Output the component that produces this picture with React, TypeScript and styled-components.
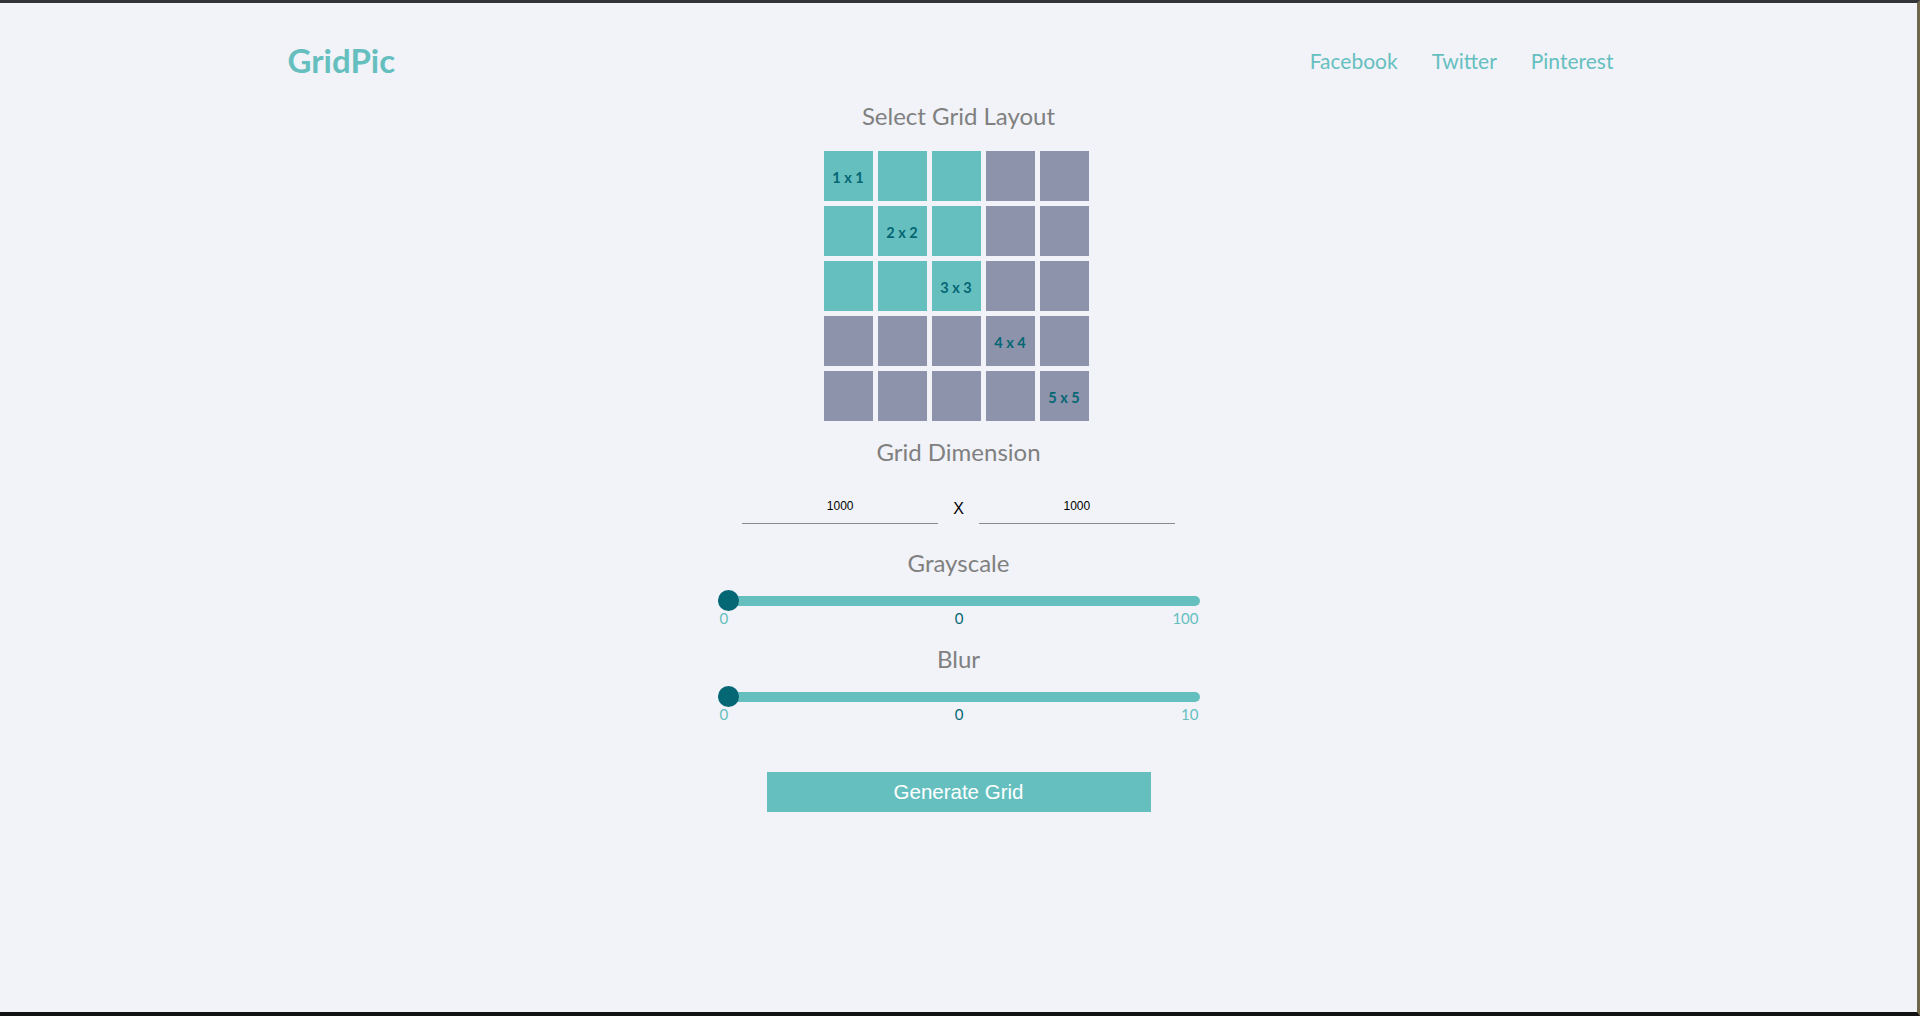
import React, { useState } from 'react';
import styled, { createGlobalStyle } from 'styled-components';

const colors = {
  bg: '#f1f3f8',
  teal: '#66bfbf',
  darkTeal: '#056674',
  slate: '#8d93ab',
  title: '#808080',
};

const GlobalStyle = createGlobalStyle`
  html, body {
    margin: 0;
    padding: 0;
    background: ${colors.bg};
    font-family: Lato, "Open Sans", sans-serif;
  }
  * {
    box-sizing: border-box;
  }
`;

const Frame = styled.div`
  min-height: 100vh;
  border-top: 3px solid #333438;
  border-right: 3px solid #70664c;
  border-bottom: 4px solid #121212;
  display: flex;
  flex-direction: column;
`;

const Header = styled.header`
  width: 70%;
  margin: 0 auto;
  padding-top: 36px;
  display: flex;
  align-items: center;
  justify-content: space-between;
`;

const Logo = styled.h1`
  margin: 0;
  font-size: 33px;
  line-height: 42px;
  font-weight: 700;
  color: ${colors.teal};
`;

const Nav = styled.nav`
  display: flex;
  margin-top: 2px;
`;

const NavLink = styled.a`
  padding: 0 16px 0 18px;
  font-size: 21px;
  line-height: 26px;
  color: ${colors.teal};
  text-decoration: none;
`;

const Main = styled.main`
  display: flex;
  flex-direction: column;
  align-items: center;
`;

const Title = styled.h2<{ $top: number }>`
  margin: ${p => p.$top}px 0 0;
  font-size: 24px;
  line-height: 29px;
  font-weight: 400;
  color: ${colors.title};
`;

const Grid = styled.div`
  margin-top: 21px;
  padding-right: 5px;
  display: grid;
  grid-template-columns: repeat(5, 49px);
  grid-auto-rows: 50px;
  gap: 5px;
`;

const Cell = styled.div<{ $active: boolean }>`
  background: ${p => (p.$active ? colors.teal : colors.slate)};
  display: flex;
  align-items: center;
  justify-content: center;
  padding-top: 2px;
  font-size: 14.5px;
  font-weight: 700;
  color: ${colors.darkTeal};
  cursor: pointer;
`;

const DimensionRow = styled.div`
  margin-top: 20px;
  display: flex;
  align-items: center;
`;

const DimensionInput = styled.input`
  width: 196px;
  height: 38px;
  border: none;
  border-bottom: 1px solid #8a8a8a;
  background: transparent;
  text-align: center;
  font-family: "Liberation Sans", Arial, sans-serif;
  font-size: 12px;
  color: #000;
  outline: none;
  padding: 2px 0 0;
`;

const Times = styled.span`
  margin: 0 15px;
  padding-top: 8px;
  font-family: "Liberation Sans", Arial, sans-serif;
  font-size: 16px;
  color: #000;
`;

const SliderBlock = styled.div`
  width: 482px;
  margin-top: 13px;
`;

const Range = styled.input`
  -webkit-appearance: none;
  appearance: none;
  display: block;
  width: 100%;
  height: 21px;
  margin: 0;
  background: transparent;
  outline: none;

  &::-webkit-slider-runnable-track {
    height: 10px;
    border-radius: 5px;
    background: ${colors.teal};
  }

  &::-webkit-slider-thumb {
    -webkit-appearance: none;
    width: 21px;
    height: 21px;
    margin-top: -5.5px;
    border-radius: 50%;
    background: ${colors.darkTeal};
    cursor: pointer;
  }
`;

const RangeLabels = styled.div`
  margin-top: -2px;
  padding: 0 1px 0 2px;
  display: grid;
  grid-template-columns: 1fr auto 1fr;
  font-size: 15px;
  line-height: 18px;
  color: ${colors.teal};
`;

const Bound = styled.span<{ $end?: boolean }>`
  text-align: ${p => (p.$end ? 'right' : 'left')};
`;

const Current = styled.span`
  color: ${colors.darkTeal};
`;

const GenerateButton = styled.button`
  margin-top: 49px;
  width: 384px;
  height: 40px;
  border: none;
  background: ${colors.teal};
  color: #fff;
  font-family: "Liberation Sans", Arial, sans-serif;
  font-size: 20.5px;
  cursor: pointer;
`;

const labels: Record<string, string> = { '0-0': '1 x 1', '1-1': '2 x 2', '2-2': '3 x 3', '3-3': '4 x 4', '4-4': '5 x 5' };

const Slider: React.FC<{ max: number; value: number; onChange: (v: number) => void }> = ({ max, value, onChange }) => (
  <SliderBlock>
    <Range type="range" min={0} max={max} value={value} onChange={e => onChange(Number(e.target.value))} />
    <RangeLabels>
      <Bound>0</Bound>
      <Current>{value}</Current>
      <Bound $end>{max}</Bound>
    </RangeLabels>
  </SliderBlock>
);

export default function App() {
  const [size, setSize] = useState(3);
  const [width, setWidth] = useState('1000');
  const [height, setHeight] = useState('1000');
  const [grayscale, setGrayscale] = useState(0);
  const [blur, setBlur] = useState(0);

  return (
    <Frame>
      <GlobalStyle />
      <Header>
        <Logo>GridPic</Logo>
        <Nav>
          <NavLink href="#">Facebook</NavLink>
          <NavLink href="#">Twitter</NavLink>
          <NavLink href="#">Pinterest</NavLink>
        </Nav>
      </Header>
      <Main>
        <Title $top={20}>Select Grid Layout</Title>
        <Grid>
          {Array.from({ length: 25 }, (_, i) => {
            const r = Math.floor(i / 5);
            const c = i % 5;
            return (
              <Cell key={i} $active={r < size && c < size} onClick={() => setSize(Math.max(r, c) + 1)}>
                {labels[`${r}-${c}`]}
              </Cell>
            );
          })}
        </Grid>
        <Title $top={16}>Grid Dimension</Title>
        <DimensionRow>
          <DimensionInput value={width} onChange={e => setWidth(e.target.value)} />
          <Times>X</Times>
          <DimensionInput value={height} onChange={e => setHeight(e.target.value)} />
        </DimensionRow>
        <Title $top={24}>Grayscale</Title>
        <Slider max={100} value={grayscale} onChange={setGrayscale} />
        <Title $top={17}>Blur</Title>
        <Slider max={10} value={blur} onChange={setBlur} />
        <GenerateButton>Generate Grid</GenerateButton>
      </Main>
    </Frame>
  );
}
